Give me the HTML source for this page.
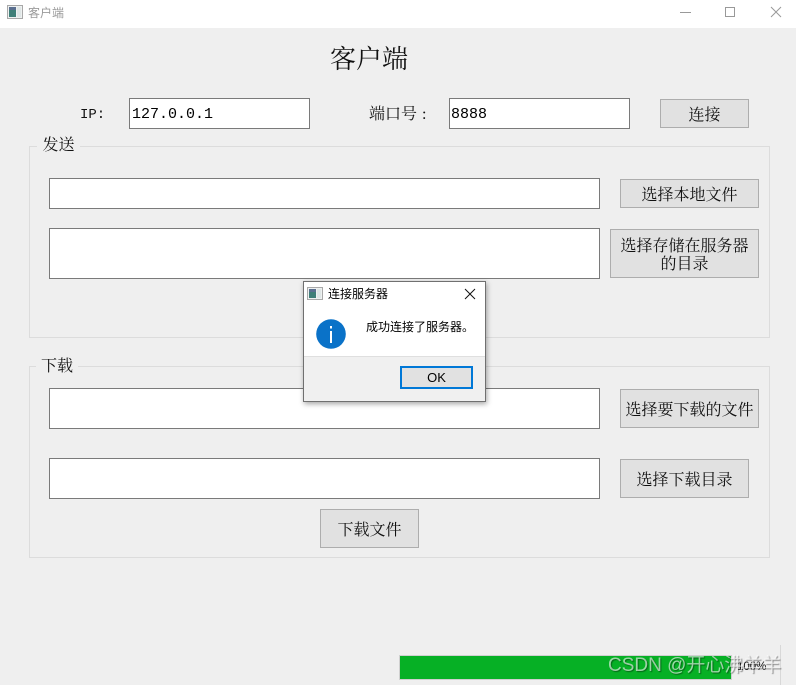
<!DOCTYPE html>
<html lang="zh">
<head>
<meta charset="utf-8">
<style>
html,body{margin:0;padding:0;width:796px;height:685px;overflow:hidden;background:#efefef;font-family:"Liberation Serif","Noto Serif CJK SC",serif;color:#000}
.a{position:absolute;box-sizing:border-box}
.in{background:#fff;border:1px solid #7a7a7a;font-size:15px;line-height:31px;padding-left:2px;white-space:pre;font-family:"Liberation Mono",monospace}
.b{background:#e1e1e1;border:1px solid #adadad;font-size:16px;text-align:center;display:flex;align-items:center;justify-content:center;line-height:18px;padding-top:5px;color:#111}
.g{border:1px solid #dcdcdc}
.l{font-size:16px;background:#efefef;line-height:20px;white-space:nowrap;text-align:center;color:#111}
.s{font-family:"Liberation Sans","Noto Sans CJK SC",sans-serif}
</style>
</head>
<body>
<div class="a" style="left:0;top:0;width:796px;height:28px;background:#fff"></div>
<svg class="a" style="left:7px;top:5px" width="16" height="16" viewBox="0 0 16 16"><rect x=".5" y=".5" width="15" height="13" fill="#eef1f1" stroke="#a8a8a8"/><rect x="2" y="2" width="7" height="10" fill="#3f7f78"/><rect x="2" y="2" width="7" height="3" fill="#5a6f8f"/><rect x="10" y="2" width="4" height="10" fill="#dfe6e6"/></svg>
<div class="a s" style="left:28px;top:5px;font-size:12px;line-height:16px;color:#9a9a9a">客户端</div>
<svg class="a" style="left:670px;top:0" width="126" height="28" viewBox="0 0 126 28" fill="none" stroke="#999"><path d="M10 12.5H21"/><rect x="55.5" y="7.5" width="9" height="9"/><path d="M101 7L111 17M111 7L101 17"/></svg>

<div class="a" style="left:330px;top:44px;font-size:26px;line-height:32px;white-space:nowrap;color:#111">客户端</div>

<div class="a" style="left:80px;top:106px;font-size:14px;line-height:18px;font-family:'Liberation Mono',monospace;white-space:pre;color:#111">IP:</div>
<div class="a in" style="left:129px;top:98px;width:181px;height:31px">127.0.0.1</div>
<div class="a" style="left:369px;top:105px;font-size:16px;line-height:20px;white-space:nowrap;color:#111">端口号<span style="margin-left:5px">:</span></div>
<div class="a in" style="left:449px;top:98px;width:181px;height:31px;padding-left:1px">8888</div>
<div class="a b" style="left:660px;top:99px;width:89px;height:29px">连接</div>

<div class="a g" style="left:29px;top:146px;width:741px;height:192px"></div>
<div class="a l" style="left:37px;top:136px;width:43px;height:19px;line-height:19px">发送</div>
<div class="a in" style="left:49px;top:178px;width:551px;height:31px"></div>
<div class="a b" style="left:620px;top:179px;width:139px;height:29px">选择本地文件</div>
<div class="a in" style="left:49px;top:228px;width:551px;height:51px"></div>
<div class="a b" style="left:610px;top:229px;width:149px;height:49px">选择存储在服务器<br>的目录</div>

<div class="a g" style="left:29px;top:366px;width:741px;height:192px"></div>
<div class="a l" style="left:36px;top:357px;width:42px;height:19px;line-height:19px">下载</div>
<div class="a in" style="left:49px;top:388px;width:551px;height:41px"></div>
<div class="a b" style="left:620px;top:389px;width:139px;height:39px">选择要下载的文件</div>
<div class="a in" style="left:49px;top:458px;width:551px;height:41px"></div>
<div class="a b" style="left:620px;top:459px;width:129px;height:39px">选择下载目录</div>
<div class="a b" style="left:320px;top:509px;width:99px;height:39px">下载文件</div>

<div class="a" style="left:399px;top:655px;width:333px;height:25px;background:#06b025;border:1px solid #d0d0d0"></div>
<div class="a s" style="left:737px;top:659px;font-size:11.5px;line-height:16px;color:#111">100%</div>
<div class="a" style="left:780px;top:645px;width:1px;height:40px;background:#d8d8d8"></div>
<div class="a s" style="left:608px;top:654px;font-size:19px;line-height:24px;color:rgba(255,255,255,.6);text-shadow:1px 1px 1px rgba(0,0,0,.4);white-space:nowrap">CSDN @开心沸羊羊</div>

<div class="a" style="left:303px;top:281px;width:183px;height:121px;background:#fff;border:1px solid #707070;box-shadow:1px 2px 5px rgba(0,0,0,.35)"></div>
<div class="a" style="left:304px;top:356px;width:181px;height:45px;background:#f0f0f0;border-top:1px solid #dfdfdf"></div>
<svg class="a" style="left:307px;top:286px" width="16" height="16" viewBox="0 0 16 16"><rect x=".5" y="1.5" width="15" height="12" fill="#eef1f1" stroke="#a8a8a8"/><rect x="2" y="3" width="7" height="9" fill="#3f7f78"/><rect x="2" y="3" width="7" height="3" fill="#5a6f8f"/><rect x="10" y="3" width="4" height="9" fill="#dfe6e6"/></svg>
<div class="a s" style="left:328px;top:286px;font-size:12px;line-height:16px;white-space:nowrap">连接服务器</div>
<svg class="a" style="left:464px;top:288px" width="12" height="12" viewBox="0 0 12 12" fill="none" stroke="#111"><path d="M1 1L11 11M11 1L1 11"/></svg>
<svg class="a" style="left:316px;top:319px" width="30" height="30" viewBox="0 0 30 30"><circle cx="15" cy="15" r="14.8" fill="#0a72c8"/><rect x="14" y="12" width="2" height="12" fill="#fff"/><rect x="14" y="7" width="2" height="2.5" fill="#fff"/></svg>
<div class="a s" style="left:366px;top:319px;font-size:12px;line-height:16px;white-space:nowrap">成功连接了服务器。</div>
<div class="a s" style="left:400px;top:366px;width:73px;height:23px;background:#e1e1e1;border:2px solid #0078d7;font-size:13px;line-height:19px;text-align:center">OK</div>
</body>
</html>
